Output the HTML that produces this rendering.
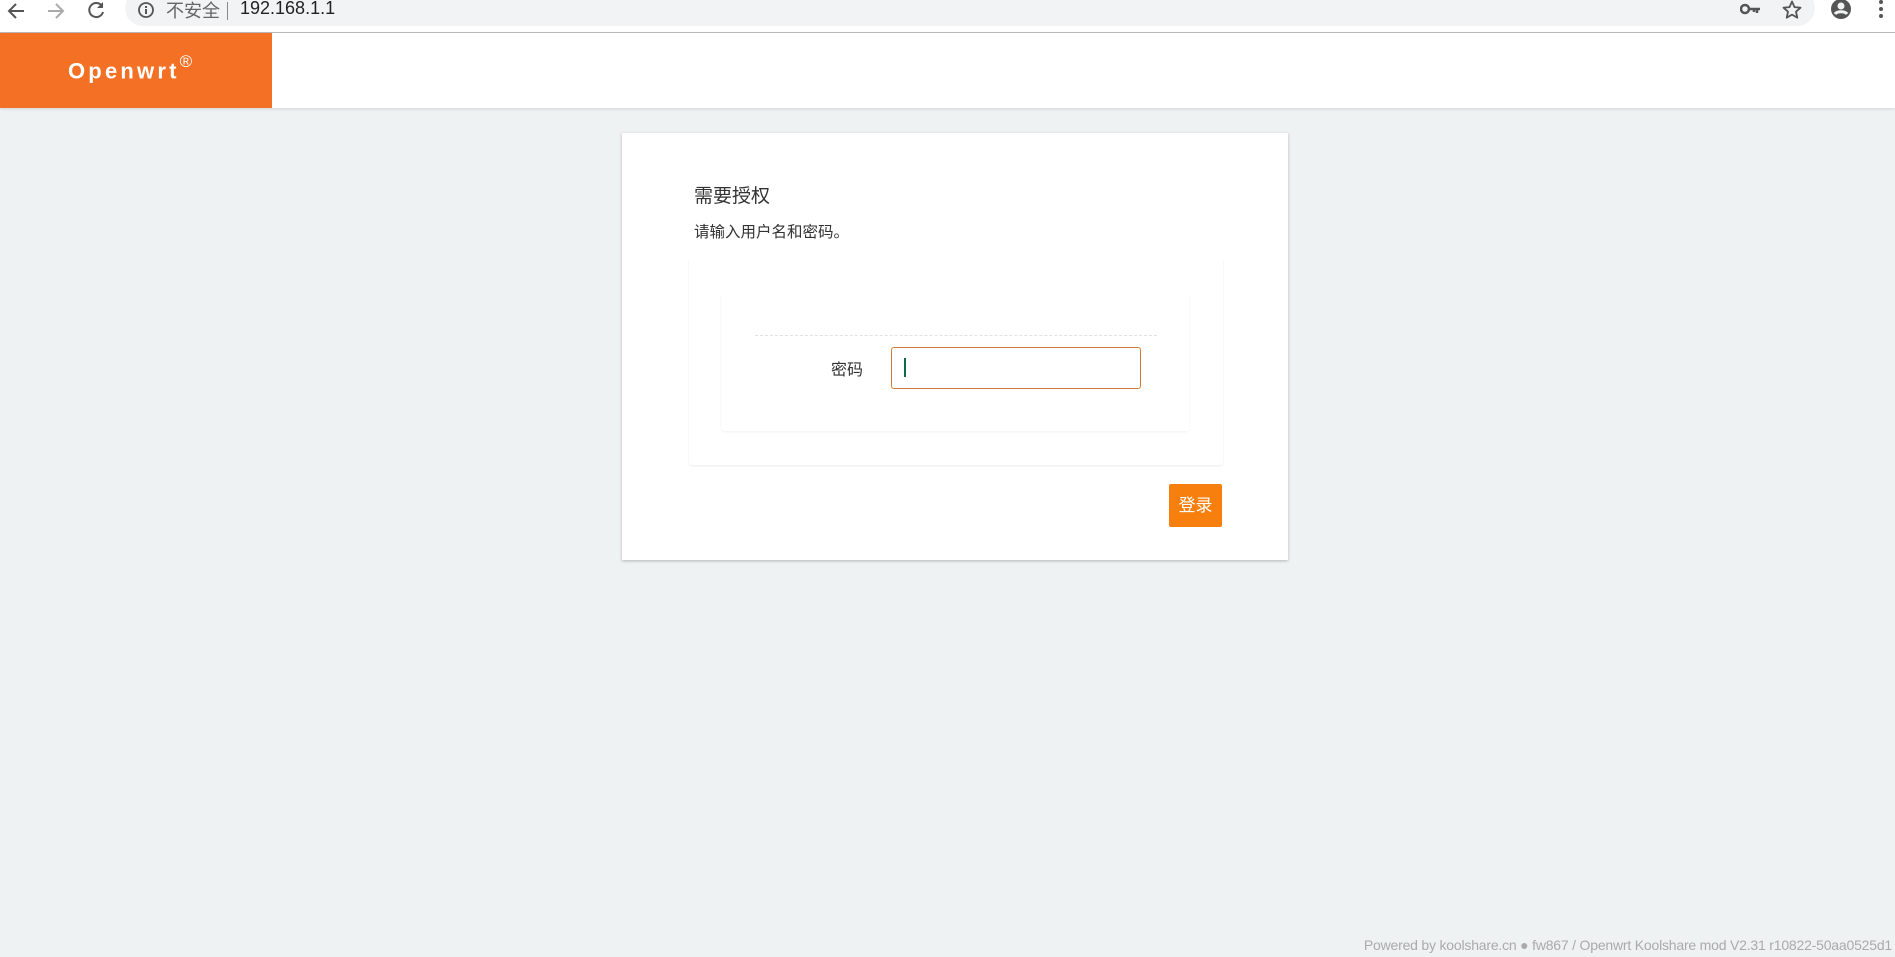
<!DOCTYPE html>
<html><head><meta charset="utf-8"><style>
*{margin:0;padding:0;box-sizing:border-box}
body{width:1895px;height:957px;background:#eef2f3;position:relative;overflow:hidden;font-family:"Liberation Sans","Noto Sans CJK SC",sans-serif;color:#333}
.abs{position:absolute}
#chrome{left:0;top:0;width:1895px;height:33px;background:#fff;border-bottom:1px solid #bbb}
#url{left:125px;top:-10px;width:1690px;height:36px;background:#f1f3f4;border-radius:18px}
#hdr{left:0;top:33px;width:1895px;height:75px;background:#fff;box-shadow:0 1px 3px rgba(0,0,0,.12)}
#logo{left:0;top:33px;width:272px;height:75px;background:#f47024}
#card{left:622px;top:133px;width:666px;height:427px;background:#fff;box-shadow:0 1px 3px rgba(0,0,0,.25)}
</style></head><body>
<div id="chrome" class="abs">
 <div id="url" class="abs"></div>
 <svg class="abs" style="left:6px;top:1px" width="22" height="20"><path d="M18 10H4M10 3L3 10l7 7" stroke="#555" stroke-width="2" fill="none"/></svg>
 <svg class="abs" style="left:45px;top:1px" width="22" height="20"><path d="M3 10h14M11 3l7 7-7 7" stroke="#aaa" stroke-width="2" fill="none"/></svg>
 <svg class="abs" style="left:86px;top:0px" width="22" height="20"><path d="M16 6A7 7 0 1 0 17 12" stroke="#555" stroke-width="2" fill="none"/><path d="M17 2v6h-6z" fill="#555"/></svg>
 <svg class="abs" style="left:137px;top:1px" width="18" height="18"><circle cx="9" cy="9" r="7" stroke="#555" stroke-width="1.8" fill="none"/><rect x="8" y="8" width="2" height="5" fill="#555"/><rect x="8" y="5" width="2" height="2" fill="#555"/></svg>
 <div class="abs" style="left:166px;top:-3px;font-size:18px;color:#666;font-family:'Noto Sans CJK SC',sans-serif">不安全</div>
 <div class="abs" style="left:227px;top:2px;width:1px;height:18px;background:#888"></div>
 <div class="abs" style="left:240px;top:-2px;font-size:18px;color:#222">192.168.1.1</div>
 <svg class="abs" style="left:1740px;top:2px" width="22" height="14"><circle cx="5" cy="7" r="4" stroke="#555" stroke-width="2.5" fill="none"/><path d="M9 7h11M17 7v4M14 7v3" stroke="#555" stroke-width="2.5"/></svg>
 <svg class="abs" style="left:1782px;top:0px" width="20" height="19"><path d="M10 1.5l2.5 5.6 6 .6-4.5 4 1.3 6-5.3-3.1-5.3 3.1 1.3-6-4.5-4 6-.6z" stroke="#555" stroke-width="1.8" fill="none" stroke-linejoin="round"/></svg>
 <svg class="abs" style="left:1830px;top:-2px" width="22" height="22"><circle cx="11" cy="11" r="10" fill="#555"/><circle cx="11" cy="8" r="3.5" fill="#f1f3f4"/><path d="M5 16c2-3 10-3 12 0" stroke="#f1f3f4" stroke-width="3" fill="none"/></svg>
 <svg class="abs" style="left:1878px;top:0px" width="6" height="20"><circle cx="3" cy="2" r="2" fill="#555"/><circle cx="3" cy="9" r="2" fill="#555"/><circle cx="3" cy="16" r="2" fill="#555"/></svg>
</div>
<div id="hdr" class="abs"></div>
<div id="logo" class="abs"><div class="abs" style="left:68px;top:22px;color:#fff;font-weight:bold;font-size:22px;letter-spacing:3.2px">Openwrt<sup style="font-size:17px;font-weight:normal;position:relative;top:-3px">®</sup></div></div>
<div id="card" class="abs">
 <div class="abs" style="left:72px;top:48px;font-size:19px;color:#333">需要授权</div>
 <div class="abs" style="left:72px;top:87px;font-size:15.5px;color:#333">请输入用户名和密码。</div>
 <div class="abs" style="left:67px;top:124px;width:534px;height:208px;background:#fff;box-shadow:0 1px 2px rgba(0,0,0,.08);border-radius:3px"></div>
 <div class="abs" style="left:99px;top:160px;width:468px;height:138px;background:#fff;box-shadow:0 1px 2px rgba(0,0,0,.06);border-radius:3px"></div>
 <div class="abs" style="left:133px;top:202px;width:402px;border-top:1px dashed #e2e2e2"></div>
 <div class="abs" style="left:209px;top:223px;font-size:16px;color:#333">密码</div>
 <div class="abs" style="left:269px;top:214px;width:250px;height:42px;border:1px solid #d2793f;border-radius:3px"></div>
 <div class="abs" style="left:282px;top:225px;width:2px;height:19px;background:#0b6b4d"></div>
 <div class="abs" style="left:547px;top:351px;width:53px;height:43px;background:#f77f0e;border-radius:2px;color:#fff;font-size:17px;line-height:43px;text-align:center">登录</div>
</div>
<div class="abs" style="right:3px;top:937px;font-size:14px;color:#aaa;letter-spacing:-0.2px">Powered by koolshare.cn ● fw867 / Openwrt Koolshare mod V2.31 r10822-50aa0525d1</div>
</body></html>
